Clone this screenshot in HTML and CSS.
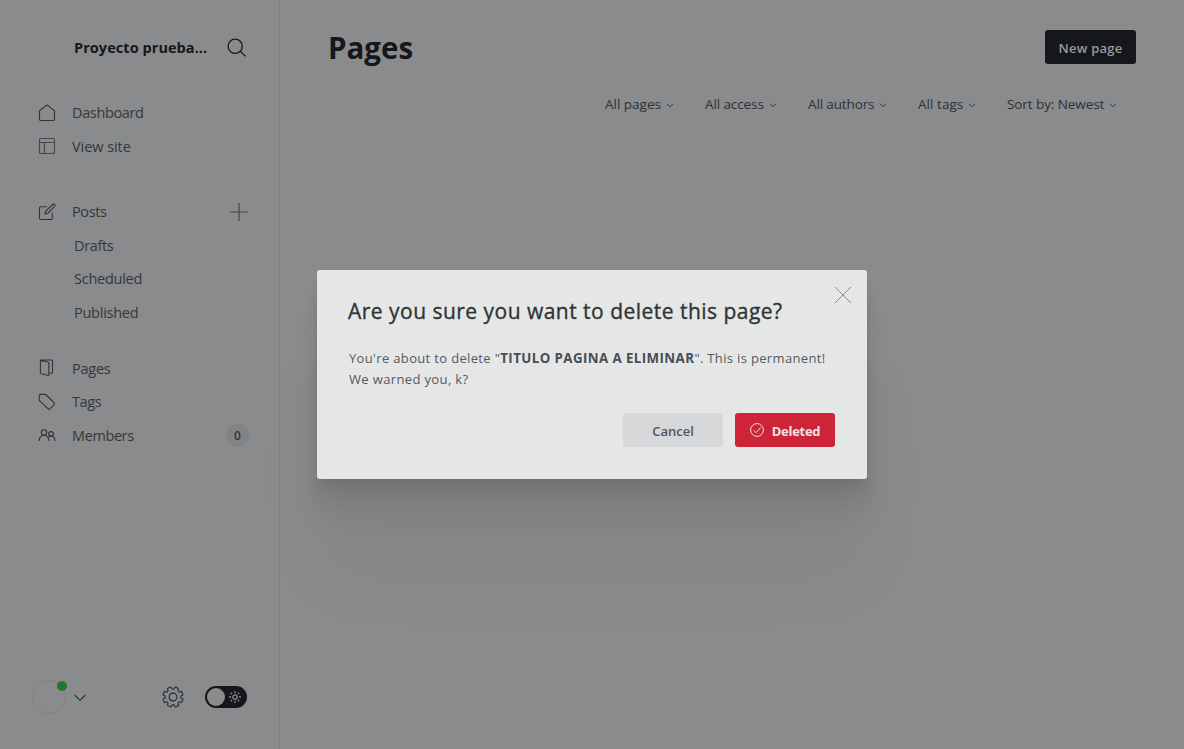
FILE: index.html
```html
<!DOCTYPE html>
<html lang="en">
<head>
<meta charset="utf-8">
<title>Pages</title>
<link rel="stylesheet" href="styles.css">
</head>
<body>
<div class="app">
  <aside class="sidebar">
    <header class="site-head">
      <span class="site-name">Proyecto prueba...</span>
      <svg class="search" viewBox="0 0 20 20"><circle cx="8.2" cy="8.2" r="7.1"/><path d="M13.3 13.3 18.6 18.4"/></svg>
    </header>
    <nav class="nav">
      <div class="group">
        <a class="item"><svg class="icon" viewBox="0 0 18 18"><path d="M1.5 6.7 9 .9l7.5 5.8v8.6a1.2 1.2 0 0 1-1.2 1.2H2.7a1.2 1.2 0 0 1-1.2-1.2z"/></svg><span class="t-dash">Dashboard</span></a>
        <a class="item"><svg class="icon faint" viewBox="0 0 18 18"><rect x="1.5" y="1.5" width="15" height="15" rx="1"/><path d="M1.500 5.500h15M6.500 5.500v11"/></svg><span class="t-view">View site</span></a>
      </div>
      <div class="group">
        <a class="item"><svg class="icon" viewBox="0 0 18 18"><path d="M9 3.700H2.700a1.200 1.200 0 0 0-1.200 1.200v10.400a1.200 1.200 0 0 0 1.200 1.200h10.400a1.200 1.200 0 0 0 1.200-1.200V9.500M7 11l.8-3L14.700 1.500a1.300 1.300 0 0 1 1.900 1.900L9.900 10.200z"/></svg><span class="t-posts">Posts</span><svg class="plus" viewBox="0 0 18 18"><path d="M9 0v18M0 9h18"/></svg></a>
        <a class="item sub"><span class="t-drafts">Drafts</span></a>
        <a class="item sub"><span class="t-sched">Scheduled</span></a>
        <a class="item sub"><span class="t-publ">Published</span></a>
      </div>
      <div class="group">
        <a class="item"><svg class="icon" viewBox="0 0 18 18"><path d="M2.500 1.400 9.800 3q1 .2 1 1.200v11.300q0 1-1 .8l-6.500-1.600q-.9-.2-.9-1.100V2q0-1 1-1h10.100q1 0 1 1v11.300q0 1-1 1h-2.600"/></svg><span class="t-pages">Pages</span></a>
        <a class="item"><svg class="icon" viewBox="0 0 18 18"><path d="M1.300 2.600q0-1.200 1.200-1.200h4.400q.8 0 1.400.6l7.900 7.800q.9.900 0 1.800l-4.300 4.300q-.9.900-1.800 0L2 8.100q-.7-.7-.7-1.400z"/></svg><span class="t-tags">Tags</span></a>
        <a class="item"><svg class="icon" viewBox="0 0 18 18"><circle cx="6" cy="6.500" r="2.700"/><path d="M1.200 15v-1a4.800 4.800 0 0 1 9.600 0v1M10.800 11.100a3.400 3.400 0 0 1 5.900 2.500V15"/><circle cx="13" cy="7.900" r="2.300"/></svg><span class="t-memb">Members</span><span class="count">0</span></a>
      </div>
    </nav>
    <footer class="foot">
      <span class="avatar"><i class="dot"></i></span>
      <svg class="chev-user" viewBox="0 0 12 8"><path d="m.7 1 5.300 5.300L11.300 1"/></svg>
      <svg class="gear" viewBox="0 0 22 22">
        <defs><path id="tooth" d="M9.200 1.400C9.900 4 12.100 4 12.800 1.400Q13 .9 13.500 1.100L16.100 2.200Q16.700 2.500 16.520 2.940"/></defs>
        <use href="#tooth"/><use href="#tooth" transform="rotate(45 11 11)"/><use href="#tooth" transform="rotate(90 11 11)"/><use href="#tooth" transform="rotate(135 11 11)"/><use href="#tooth" transform="rotate(180 11 11)"/><use href="#tooth" transform="rotate(225 11 11)"/><use href="#tooth" transform="rotate(270 11 11)"/><use href="#tooth" transform="rotate(315 11 11)"/>
        <circle cx="11" cy="11" r="3.900"/>
      </svg>
      <span class="toggle"><i class="knob"></i><svg class="sun" viewBox="0 0 12 12"><circle cx="6" cy="6" r="2.200"/><path d="M6 0v2M6 10v2M0 6h2M10 6h2M1.700 1.700l1.400 1.400M8.900 8.900l1.400 1.400M1.700 10.300l1.400-1.400M8.900 3.100l1.400-1.400"/></svg></span>
    </footer>
  </aside>
  <main class="main">
    <header class="main-head"><h1 class="title">Pages</h1><button class="new">New page</button></header>
    <div class="filters">
      <span class="filter f1"><span>All pages</span><svg class="chev" viewBox="0 0 8 5"><path d="m1 .8 3 3 3-3"/></svg></span>
      <span class="filter f2"><span>All access</span><svg class="chev" viewBox="0 0 8 5"><path d="m1 .8 3 3 3-3"/></svg></span>
      <span class="filter f3"><span>All authors</span><svg class="chev" viewBox="0 0 8 5"><path d="m1 .8 3 3 3-3"/></svg></span>
      <span class="filter f4"><span>All tags</span><svg class="chev" viewBox="0 0 8 5"><path d="m1 .8 3 3 3-3"/></svg></span>
      <span class="filter f5"><span>Sort by: Newest</span><svg class="chev" viewBox="0 0 8 5"><path d="m1 .8 3 3 3-3"/></svg></span>
    </div>
  </main>
</div>
<div class="overlay">
  <section class="modal">
    <svg class="close" viewBox="0 0 16 16"><path d="m0 0 16 16M16 0 0 16"/></svg>
    <h2 class="ask">Are you sure you want to delete this page?</h2>
    <p class="body"><span class="line1">You're about to delete "<b>TITULO PAGINA A ELIMINAR</b>". This is permanent!</span><br><span class="line2">We warned you, k?</span></p>
    <div class="actions">
      <button class="btn cancel">Cancel</button>
      <button class="btn deleted"><svg class="check" viewBox="0 0 14 14"><circle cx="7" cy="7" r="6.400"/><path d="m3.700 7.300 2.400 2.400 4.700-5.300"/></svg><span>Deleted</span></button>
    </div>
  </section>
</div>
</body>
</html>
```
FILE: styles.css
```css
* { box-sizing: border-box; }
body { margin: 0; font-family: "Open Sans", "Noto Sans", sans-serif; background: #8a8b8c; color: #2c3136; overflow: hidden; }
svg { fill: none; stroke: currentColor; flex: none; overflow: visible; }
button { font-family: inherit; border: 0; padding: 0; }
.app { display: flex; height: 749px; }

.sidebar { width: 280px; border-right: 1px solid #7f8082; display: flex; flex-direction: column; }
.site-head { height: 96px; padding: 0 32px 1px 74px; display: flex; align-items: center; justify-content: space-between; }
.site-name { font-size: 14.500px; font-weight: 700; letter-spacing: .06px; color: #15171a; white-space: nowrap; }
.search { width: 20px; height: 20px; margin-top: 1px; color: #15171a; stroke-width: 1.300; }
.nav { display: flex; flex-direction: column; }
.group { display: flex; flex-direction: column; margin-bottom: 22.500px; }
.group:first-child { margin-bottom: 32px; }
.item { height: 33.500px; padding: 0 31px 0 38px; display: flex; align-items: center; font-size: 14.500px; color: #34383d; white-space: nowrap; }
.item.sub { padding-left: 74px; }
.t-dash { letter-spacing: -.36px; }
.t-view { letter-spacing: -.06px; }
.t-posts, .t-drafts { letter-spacing: -.36px; }
.t-sched, .t-publ { letter-spacing: -.25px; }
.t-pages { letter-spacing: -.25px; }
.t-tags, .t-memb { letter-spacing: -.4px; }
.icon { width: 18px; height: 18px; margin-right: 16px; stroke-width: 1.100; color: #303439; }
.faint { color: #44474b; }
.plus { width: 18px; height: 18px; margin-left: auto; color: #44474b; stroke-width: 1.200; }
.count { margin-left: auto; margin-right: -1px; width: 23px; height: 23px; padding-top: 1px; border-radius: 50%; background: #828385; font-size: 12px; font-weight: 600; display: flex; align-items: center; justify-content: center; }
.foot { margin-top: auto; height: 104px; padding: 0 32px; display: flex; align-items: center; }
.avatar { position: relative; width: 34px; height: 34px; border: 1px solid #808183; border-radius: 50%; }
.dot { position: absolute; right: -2px; top: 0; width: 10px; height: 10px; border-radius: 50%; background: #1f7a2c; }
.chev-user { width: 12px; height: 8px; margin-left: 8px; margin-top: 1px; stroke-width: 1.100; }
.gear { width: 22px; height: 22px; margin-left: 76px; stroke-width: 1.200; stroke-linejoin: round; }
.toggle { width: 42px; height: 22px; margin-left: 21px; padding: 0 6px 0 2px; border-radius: 11px; background: #15171a; display: flex; align-items: center; justify-content: space-between; color: #8a8b8c; }
.knob { width: 18px; height: 18px; border-radius: 50%; background: #8a8b8c; }
.sun { width: 12px; height: 12px; stroke-width: 1.300; }

.main { flex: 1; padding: 0 48px 0 48px; }
.main-head { height: 94px; display: flex; align-items: center; justify-content: space-between; }
.title { margin: 0; padding-top: 1px; font-size: 29.500px; line-height: 40px; font-weight: 700; color: #15171a; }
.new { width: 91px; height: 34px; padding: 1px 0 0; border-radius: 3px; background: #15171a; color: #999a9b; font-size: 13px; font-weight: 600; letter-spacing: .25px; white-space: nowrap; }
.filters { display: flex; justify-content: flex-end; height: 20px; padding-right: 19px; gap: 31px; }
.filter { display: flex; align-items: center; justify-content: space-between; height: 20px; font-size: 13.500px; white-space: nowrap; }
.chev { width: 8px; height: 5px; margin-top: 2px; color: #34383d; }
.f1 { width: 69px; }
.f2 { width: 72px; letter-spacing: -.1px; }
.f3 { width: 79px; letter-spacing: -.13px; }
.f4 { width: 58px; letter-spacing: .05px; }
.f5 { width: 110px; letter-spacing: -.08px; }

.overlay { position: absolute; inset: 0; display: flex; align-items: center; justify-content: center; }
.modal { position: relative; width: 550px; height: 209px; padding: 26px 32px 32px; border-radius: 3px; background: #e5e7e6; box-shadow: 0 2.800px 2.200px rgba(0,0,0,.02), 0 6.700px 5.300px rgba(0,0,0,.028), 0 12.500px 10px rgba(0,0,0,.035), 0 22.300px 17.900px rgba(0,0,0,.042), 0 41.800px 33.400px rgba(0,0,0,.045), 0 100px 80px rgba(0,0,0,.035); }
.close { position: absolute; right: 16px; top: 17px; width: 16px; height: 16px; color: #8b8d8e; }
.ask { margin: 0 0 0 -1px; font-size: 21px; line-height: 30px; font-weight: 400; letter-spacing: .48px; -webkit-text-stroke: .35px; color: #303336; white-space: nowrap; }
.body { margin: 22px 0 0; font-size: 13px; line-height: 21px; letter-spacing: .34px; color: #54595f; white-space: nowrap; }
.line2 { letter-spacing: .36px; }
.body b { font-size: 13.300px; font-weight: 700; letter-spacing: .42px; color: #484e54; }
.actions { display: flex; justify-content: flex-end; gap: 12px; margin-top: 23px; }
.btn { width: 100px; height: 34px; padding-top: 1px; border-radius: 3px; font-size: 13px; font-weight: 600; display: flex; align-items: center; justify-content: center; }
.cancel { background: #d6d8da; color: #50565b; }
.deleted { background: #cd2537; color: #ece3e4; gap: 8px; font-weight: 700; letter-spacing: -.3px; }
.check { width: 14px; height: 14px; margin-top: -2px; }
```
